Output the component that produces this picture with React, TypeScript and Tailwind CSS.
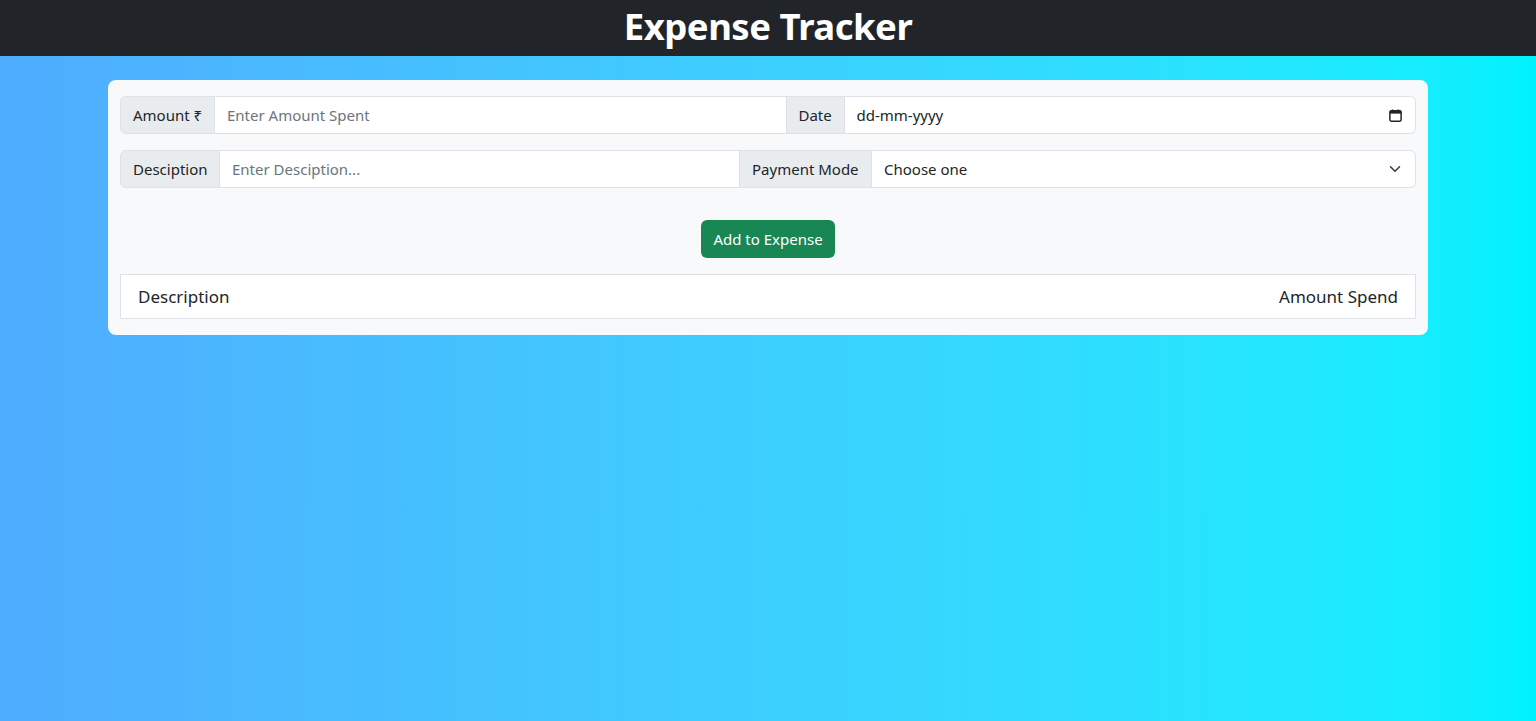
import React from "react";

const labelCls =
  "flex items-center px-3 bg-[#e9ecef] border border-[#dee2e6] text-[#212529] whitespace-nowrap";

const App: React.FC = () => {
  return (
    <div
      className="min-h-screen bg-gradient-to-r from-[#4facfe] to-[#00f2fe] text-[#212529]"
      style={{ fontFamily: '"Noto Sans", "Open Sans", sans-serif' }}
    >
      <header className="h-14 bg-[#212529] flex items-center justify-center">
        <h1 className="text-[36.5px] font-bold text-white leading-none tracking-[-0.5px] -mt-1">
          Expense Tracker
        </h1>
      </header>

      <div className="w-[1320px] mx-auto mt-6 bg-[#f8f9fa] rounded-lg px-3 py-4">
        {/* row 1 */}
        <div className="flex h-[38px] text-[15px]">
          <span className={`${labelCls} w-[95px] rounded-l-md`}>Amount ₹</span>
          <input
            placeholder="Enter Amount Spent"
            className="flex-1 min-w-0 px-3 bg-white border border-l-0 border-[#dee2e6] outline-none placeholder:text-[#6c757d]"
          />
          <span className={`${labelCls} w-[58px] border-l-0`}>Date</span>
          <div className="flex-1 flex items-center justify-between pl-3 pr-3 bg-white border border-l-0 border-[#dee2e6] rounded-r-md">
            <span>dd-mm-yyyy</span>
            <svg width="15" height="15" viewBox="0 0 16 16" fill="none">
              <rect x="2" y="3" width="12" height="11" rx="1.5" stroke="#212529" strokeWidth="1.6" />
              <rect x="2" y="3" width="12" height="3" fill="#212529" />
              <path d="M5 1.5v2M11 1.5v2" stroke="#212529" strokeWidth="1.6" />
            </svg>
          </div>
        </div>

        {/* row 2 */}
        <div className="flex h-[38px] mt-4 text-[15px]">
          <span className={`${labelCls} w-[100px] rounded-l-md`}>Desciption</span>
          <input
            placeholder="Enter Desciption..."
            className="w-[520px] px-3 bg-white border border-l-0 border-[#dee2e6] outline-none placeholder:text-[#6c757d]"
          />
          <span className={`${labelCls} w-[132px] border-l-0`}>Payment Mode</span>
          <div className="flex-1 flex items-center justify-between pl-3 pr-[14px] bg-white border border-l-0 border-[#dee2e6] rounded-r-md">
            <span>Choose one</span>
            <svg width="12" height="12" viewBox="0 0 16 16" fill="none">
              <path d="M2 5l6 6 6-6" stroke="#343a40" strokeWidth="2" strokeLinecap="round" strokeLinejoin="round" />
            </svg>
          </div>
        </div>

        <div className="flex justify-center mt-8">
          <button className="h-[38px] px-3 rounded-md bg-[#198754] text-white text-[15px]">
            Add to Expense
          </button>
        </div>

        <div className="mt-4 h-[45px] flex items-center justify-between px-[17px] bg-white border border-[#dee2e6] text-[17px]">
          <span>Description</span>
          <span>Amount Spend</span>
        </div>
      </div>
    </div>
  );
};

export default App;
